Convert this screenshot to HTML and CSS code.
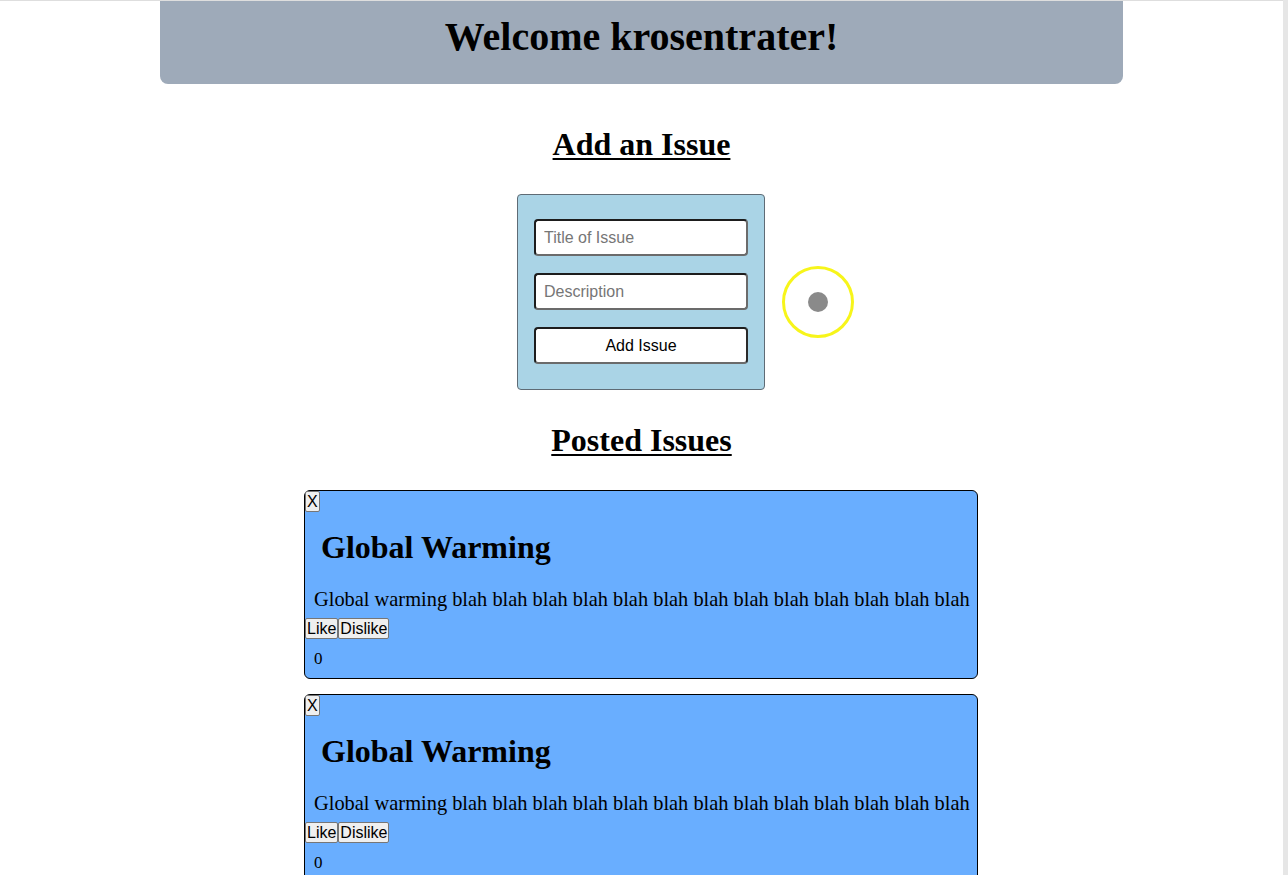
FILE: index.html
```html
<!DOCTYPE html>
<html lang="en">
<head>
<meta charset="utf-8">
<title>Issues</title>
<link rel="stylesheet" href="styles.css">
</head>
<body>
<div class="page">
  <header class="banner">
    <h1 class="banner-title">Welcome krosentrater!</h1>
  </header>

  <h2 class="section-title add-title">Add an Issue</h2>
  <form class="issue-form">
    <input class="field" type="text" placeholder="Title of Issue">
    <input class="field" type="text" placeholder="Description">
    <button class="field submit" type="button">Add Issue</button>
  </form>

  <h2 class="section-title posted-title">Posted Issues</h2>

  <div class="issues">
    <div class="card">
      <div class="card-top"><button class="mini" type="button">X</button></div>
      <h3 class="card-title">Global Warming</h3>
      <p class="card-text">Global warming blah blah blah blah blah blah blah blah blah blah blah blah blah</p>
      <div class="votes"><button class="mini" type="button">Like</button><button class="mini" type="button">Dislike</button></div>
      <div class="count">0</div>
    </div>
    <div class="card">
      <div class="card-top"><button class="mini" type="button">X</button></div>
      <h3 class="card-title">Global Warming</h3>
      <p class="card-text">Global warming blah blah blah blah blah blah blah blah blah blah blah blah blah</p>
      <div class="votes"><button class="mini" type="button">Like</button><button class="mini" type="button">Dislike</button></div>
      <div class="count">0</div>
    </div>
  </div>

  <div class="cursor-ring"><div class="cursor-dot"></div></div>
</div>
<div class="scrollbar"></div>
</body>
</html>
```
FILE: styles.css
```css
html, body {
  margin: 0;
  padding: 0;
  background: #ffffff;
}
body {
  display: flex;
  height: 875px;
  overflow: hidden;
  font-family: "Liberation Serif", "Times New Roman", serif;
  color: #000;
}
.page {
  position: relative;
  flex: 1;
  border-top: 1px solid #dedede;
  display: flex;
  flex-direction: column;
  align-items: center;
}
.scrollbar {
  width: 5px;
  background: #e6e6e6;
}
.banner {
  width: 963px;
  background: #9eaab9;
  border-radius: 0 0 8px 8px;
  padding: 13px 0 24px;
  box-sizing: border-box;
  height: 84px;
}
.banner-title {
  margin: 0;
  text-align: center;
  font-size: 40px;
  line-height: 46px;
  font-weight: bold;
}
.section-title {
  margin: 0;
  font-size: 32px;
  line-height: 37px;
  font-weight: bold;
  text-decoration: underline;
  text-decoration-thickness: 2px;
  text-underline-offset: 3px;
}
.add-title { margin-top: 42px; }
.posted-title { margin-top: 32px; }
.issue-form {
  margin: 31px 1px 0 0;
  width: 248px;
  box-sizing: border-box;
  padding: 24px 16px 25px;
  background: #aad4e6;
  border: 1px solid #5f6b75;
  border-radius: 4px;
  display: flex;
  flex-direction: column;
  gap: 17px;
}
.field {
  width: 214px;
  height: 37px;
  box-sizing: border-box;
  margin: 0;
  border: 2px solid;
  border-color: #1d1d1d #6b6b6b #6b6b6b #1d1d1d;
  border-radius: 4px;
  background: #ffffff;
  padding: 0 8px;
  font-family: "Liberation Sans", Arial, sans-serif;
  font-size: 16px;
  color: #000;
}
.field::placeholder { color: #767676; }
.submit {
  text-align: center;
  border-color: #1d1d1d #2a2a2a #6b6b6b #1d1d1d;
}
.issues {
  margin: 31px 1px 0 0;
  display: flex;
  flex-direction: column;
  gap: 15px;
}
.card {
  width: 674px;
  box-sizing: border-box;
  background: #69aeff;
  border: 1px solid #000;
  border-radius: 6px;
  padding: 0 0 10px;
}
.card-top { display: flex; }
.mini {
  margin: 0;
  height: 21px;
  padding: 0 1px;
  border: 1px solid #767676;
  border-radius: 2px;
  background: #efefef;
  font-family: "Liberation Sans", Arial, sans-serif;
  font-size: 16px;
  line-height: 19px;
  color: #000;
}
.card-title {
  margin: 17px 0 0 16px;
  font-size: 32px;
  line-height: 36px;
  font-weight: bold;
}
.card-text {
  margin: 22px 0 0 9px;
  font-size: 20.4px;
  line-height: 25px;
  white-space: nowrap;
}
.votes {
  margin-top: 6px;
  display: flex;
}
.count {
  margin: 11px 0 0 9px;
  font-size: 17px;
  line-height: 18px;
}
.cursor-ring {
  position: absolute;
  left: 782px;
  top: 265px;
  width: 72px;
  height: 72px;
  box-sizing: border-box;
  border: 3px solid #f7f51a;
  border-radius: 50%;
  display: flex;
  align-items: center;
  justify-content: center;
}
.cursor-dot {
  width: 20px;
  height: 20px;
  border-radius: 50%;
  background: #8a8a8a;
  filter: blur(0.6px);
}
```
